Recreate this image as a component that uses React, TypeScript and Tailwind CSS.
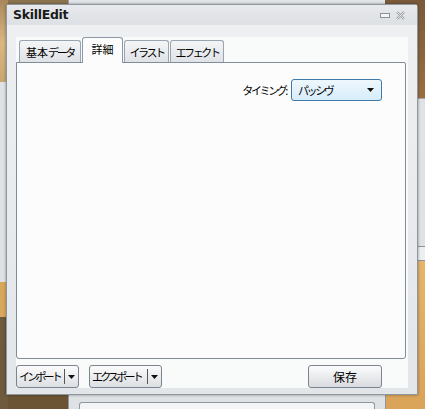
import React from "react";

const jp = { fontFamily: '"Noto Sans CJK JP", "Noto Sans", sans-serif' };
const kana = { ...jp, letterSpacing: "-2.4px" };
const kanaTight = { ...jp, letterSpacing: "-2.8px" };

function Tab({ label, selected, w }: { label: React.ReactNode; selected?: boolean; w: number }) {
  return (
    <div
      className={
        selected
          ? "relative z-10 -mb-px flex h-[26px] items-start justify-center whitespace-nowrap rounded-t-[3px] border border-b-0 border-[#8b99a6] bg-[#fcfcfc] pt-[4px] text-[11px] leading-[14px] text-black"
          : "flex h-[22px] items-start justify-center self-end whitespace-nowrap rounded-t-[3px] border border-b-0 border-[#98a4b0] bg-gradient-to-b from-[#f4f5f6] to-[#dfe2e6] pt-[4px] text-[11px] leading-[14px] text-black"
      }
      style={{ width: w }}
    >
      {label}
    </div>
  );
}

function SplitButton({ label, w }: { label: string; w: number }) {
  return (
    <div
      className="flex h-[23px] items-center whitespace-nowrap rounded-[3px] border border-[#7a8590] bg-gradient-to-b from-[#fbfbfb] to-[#dcdfe3] text-[11px] text-black"
      style={{ width: w }}
    >
      <span className="min-w-0 flex-1 pl-[2px] leading-none" style={kanaTight}>{label}</span>
      <span className="h-[15px] w-px shrink-0 bg-[#555]" />
      <span className="flex w-[13px] shrink-0 justify-center">
        <svg width="7" height="4" viewBox="0 0 7 4"><path d="M0 0h7L3.5 4z" fill="#111" /></svg>
      </span>
    </div>
  );
}

export default function App() {
  return (
    <div className="relative h-[409px] w-[425px] overflow-hidden bg-[#6b5434]">
      {/* desktop background */}
      <div className="absolute left-0 top-0 h-[85px] w-[8px] bg-gradient-to-b from-[#a8885a] via-[#d9b883] to-[#c8a571]" />
      <div className="absolute left-0 top-[82px] h-[200px] w-[8px] bg-[#dfe2e5]" />
      <div className="absolute left-0 top-[282px] h-[35px] w-[8px] bg-[#d9a75c]" />
      <div className="absolute left-0 top-[317px] h-[92px] w-[8px] bg-[#6e5a3c]" />
      <div className="absolute left-[8px] top-0 h-[6px] w-[60px] bg-[#8c7450]" />
      <div className="absolute left-[68px] top-0 h-[6px] w-[318px] border-x border-[#9aa1a8] bg-[#e2e5e8]" />
      <div className="absolute left-[385px] top-0 h-[100px] w-[40px] bg-gradient-to-b from-[#7a5a3a] to-[#9a6e42]" />
      <div className="absolute left-[385px] top-[98px] h-[150px] w-[40px] border-t border-[#a0a6ac] bg-[#e0e3e6]" />
      <div className="absolute left-[385px] top-[246px] h-[15px] w-[40px] border-y border-[#8d949b] bg-[#eceef0]" />
      <div className="absolute left-[385px] top-[261px] h-[150px] w-[40px] bg-gradient-to-b from-[#e6b46a] to-[#d9a358]" />
      <div className="absolute left-[68px] top-[390px] h-[19px] w-[318px] border-x border-[#8f969d] bg-[#dfe2e5]">
        <div className="mx-[10px] mt-[12px] h-[8px] rounded-t-[3px] border border-b-0 border-[#8f969d] bg-[#f3f4f5]" />
      </div>

      {/* window */}
      <div className="absolute left-[6px] top-[4px] flex h-[391px] w-[412px] flex-col rounded-t-[3px] border border-[#8f969e] bg-gradient-to-b from-[#eef0f2] to-[#e3e6e9] shadow-[0_0_3px_rgba(0,0,0,0.4)]">
        <div className="flex h-[20px] items-center justify-between bg-gradient-to-b from-[#e7e9ec] to-[#dde0e4] pl-[6px] pr-[12px]">
          <span className="text-[12.5px] font-bold text-[#1a1a1a]" style={{ fontFamily: '"DejaVu Sans", sans-serif', letterSpacing: "-0.3px" }}>
            SkillEdit
          </span>
          <div className="flex items-center gap-[6px]">
            <svg width="10" height="5" viewBox="0 0 10 5"><rect x="0.5" y="0.5" width="9" height="4" fill="#f4f5f6" stroke="#8a929a" /></svg>
            <svg width="9" height="9" viewBox="0 0 9 9"><path d="M1 1l7 7M8 1L1 8" stroke="#9aa1a8" strokeWidth="2.4" /><path d="M1 1l7 7M8 1L1 8" stroke="#f5f6f7" strokeWidth="0.8" /></svg>
          </div>
        </div>
        <div className="flex-1 px-[9px] pb-[6px] pt-[12px]">
          <div className="flex h-full flex-col bg-[#f9fafa]">
            <div className="flex h-[25px] items-end gap-px pl-[3px] pt-0">
              <Tab label={<><span style={jp}>基本</span><span style={kana}>データ</span></>} w={62} />
              <Tab label={<span style={jp}>詳細</span>} selected w={41} />
              <Tab label={<span style={kana}>イラスト</span>} w={45} />
              <Tab label={<span style={kana}>エフェクト</span>} w={54} />
            </div>
            <div className="h-[297px] w-[390px] rounded-b-[3px] rounded-tr-[2px] border border-[#7f8d99] bg-[#fcfcfc]">
              <div className="flex items-center justify-end pr-[23px] pt-[16px]">
                <span className="mr-[5px] whitespace-nowrap text-[11px] text-black" style={kana}>タイミング:</span>
                <div className="flex h-[22px] w-[91px] items-center justify-between rounded-[3px] border border-[#3d7bad] bg-gradient-to-b from-[#eef7fd] to-[#d7edfa] pl-[6px] pr-[7px]">
                  <span className="whitespace-nowrap text-[11px] text-black" style={kana}>パッシヴ</span>
                  <svg width="7" height="4" viewBox="0 0 7 4"><path d="M0 0h7L3.5 4z" fill="#111" /></svg>
                </div>
              </div>
            </div>
            <div className="mt-auto flex items-end">
              <SplitButton label="インポート" w={63} />
              <div className="ml-[10px]"><SplitButton label="エクスポート" w={73} /></div>
              <div className="ml-auto mr-[26px] flex h-[23px] w-[74px] items-center justify-center rounded-[3px] border border-[#7a8590] bg-gradient-to-b from-[#fbfbfb] to-[#d9dce0] text-[12px] text-black" style={jp}>
                保存
              </div>
            </div>
          </div>
        </div>
      </div>
    </div>
  );
}
